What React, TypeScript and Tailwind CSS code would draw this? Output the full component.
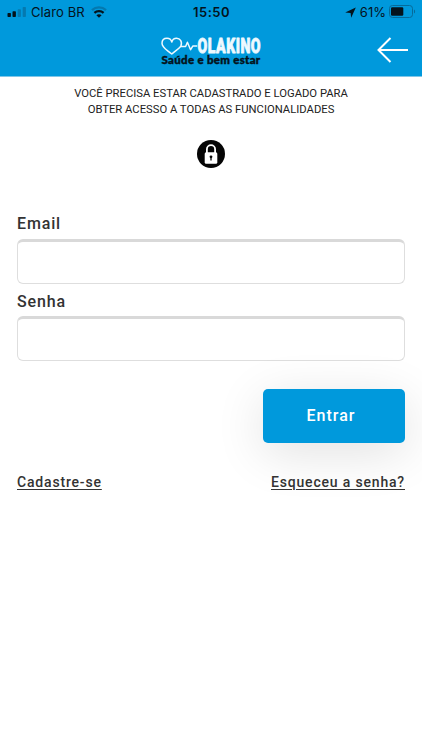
import React from 'react';

interface FieldProps {
  id: string;
  label: string;
  type: string;
}

const SignalIcon = () => (
  <svg width="20" height="10" viewBox="0 0 20 10">
    <rect x="0.5" y="6" width="3.4" height="4" rx="0.7" fill="#04131c" />
    <rect x="5.5" y="4.2" width="3.4" height="5.8" rx="0.7" fill="#04131c" />
    <rect x="10.7" y="2.2" width="3.2" height="7.8" rx="0.7" fill="#0479af" />
    <rect x="15.7" y="0" width="3.2" height="10" rx="0.7" fill="#0479af" />
  </svg>
);

const WifiIcon = () => (
  <svg width="16" height="12" viewBox="0 0 16 12" fill="none" strokeWidth="2.3">
    <path d="M1 4.1C4.9.4 11.1.4 15 4.1" stroke="#0479af" />
    <path d="M3.4 6.9c2.6-2.4 6.6-2.4 9.2 0" stroke="#04131c" />
    <path d="M8 11.8 5.4 9.3c1.5-1.3 3.7-1.3 5.2 0z" fill="#04131c" />
  </svg>
);

const LocationIcon = () => (
  <svg width="11" height="11" viewBox="0 0 11 11" fill="#04131c">
    <path d="M10.8.4 6.2 10.8 5.6 6.1.2 5.4z" />
  </svg>
);

const BatteryIcon = () => (
  <svg width="27" height="13" viewBox="0 0 27 13" className="-mt-px">
    <rect x="0.5" y="0.5" width="23" height="12" rx="3" fill="none" stroke="#066a99" />
    <rect x="2" y="2.2" width="12.3" height="8.6" rx="1.2" fill="#04131c" />
    <path d="M25 4.5v4c1.5-.7 1.5-3.3 0-4z" fill="#066a99" />
  </svg>
);

const Logo = () => (
  <svg width="102" height="32" viewBox="0 0 102 32" className="overflow-visible">
    <path
      d="M20.8 10.5C22.8 5.2 19.8 2.2 16.6 2.2c-2.4 0-4.2 1.6-4.8 3.8-.6-2.2-2.4-3.8-4.8-3.8C4 2.2 2 4.3 2 7.3c0 4.9 5.8 7 9.8 10.7 3-2.9 6.8-4.9 8.8-7.5h5l1.8-4.2 3.2 7.4 2.2-3.6h4.4"
      fill="none"
      stroke="#eef9ff"
      strokeWidth="1.5"
      strokeLinejoin="round"
    />
    <text
      x="37.6"
      y="17"
      textLength="63.5"
      lengthAdjust="spacingAndGlyphs"
      fill="#eef9ff"
      stroke="#eef9ff"
      strokeWidth="0.8"
      strokeLinejoin="round"
      className="font-['Roboto','Liberation_Sans',sans-serif] text-[20px] font-black tracking-[0.7px]"
    >
      OLAKINO
    </text>
    <text
      x="1.5"
      y="28.2"
      textLength="99"
      lengthAdjust="spacingAndGlyphs"
      fill="#04131c"
      stroke="#04131c"
      strokeWidth="0.4"
      className="font-['Lato','Liberation_Sans',sans-serif] text-[10.5px] font-black tracking-[0.3px]"
    >
      Saúde e bem estar
    </text>
  </svg>
);

const BackIcon = () => (
  <svg width="32" height="26" viewBox="0 0 32 26" fill="none" stroke="#fff" strokeWidth="2">
    <path d="M31 13H1.5M13.5 1 1.5 13l12 12" />
  </svg>
);

const LockIcon = () => (
  <svg width="28" height="28" viewBox="0 0 28 28">
    <circle cx="14" cy="14" r="14" fill="#050505" />
    <path d="M9.9 13.5V9.2a4.1 4.1 0 0 1 8.2 0v4.3" fill="none" stroke="#fff" strokeWidth="1.8" />
    <rect x="7.7" y="12.3" width="12.6" height="11.4" rx="1.5" fill="#fff" />
    <circle cx="14" cy="16.8" r="1.4" fill="#050505" />
    <path d="M14 17v3.6" stroke="#050505" strokeWidth="1.3" />
  </svg>
);

const Field: React.FC<FieldProps> = ({ id, label, type }) => (
  <div className="h-[77.5px]">
    <label htmlFor={id} className="block h-[24.5px] text-[16px] leading-5 font-medium tracking-[0.85px]">
      {label}
    </label>
    <input
      id={id}
      type={type}
      className="block h-[45px] w-full rounded-md border border-t-[3px] border-[#dedede] border-t-[#d9d9d9] bg-white px-3 outline-none"
    />
  </div>
);

export default function App() {
  return (
    <div className="min-h-[750px] w-full overflow-hidden bg-white font-['Roboto','Liberation_Sans',sans-serif] text-[#333]">
      <header className="h-[77px] border-b border-[#7fc6e8] bg-[#0099dc]">
        {/* Status bar */}
        <div className="grid h-6 grid-cols-3 items-center pr-[6px] pl-[7px] font-['Inter','Liberation_Sans',sans-serif] text-[13px] text-[#04131c]">
          <div className="flex items-center">
            <SignalIcon />
            <span className="ml-1 w-[60px] pt-px whitespace-nowrap tracking-[0.1px]">Claro BR</span>
            <WifiIcon />
          </div>
          <div className="pt-px text-center font-semibold tracking-[0.5px]">15:50</div>
          <div className="flex items-center justify-end">
            <LocationIcon />
            <span className="mr-[3px] ml-1 pt-px">61%</span>
            <BatteryIcon />
          </div>
        </div>

        {/* Logo and back button */}
        <div className="grid h-[52px] grid-cols-[1fr_102px_1fr] items-center pr-[13px] pl-[13px]">
          <div />
          <div className="pt-1">
            <Logo />
          </div>
          <button type="button" aria-label="Voltar" className="justify-self-end">
            <BackIcon />
          </button>
        </div>
      </header>

      <main className="px-[17px] pt-[9px]">
        <p className="text-center text-[11.25px] leading-4 text-[#222]">
          VOCÊ PRECISA ESTAR CADASTRADO E LOGADO PARA
          <br />
          OBTER ACESSO A TODAS AS FUNCIONALIDADES
        </p>
        <div className="mt-[22px] flex justify-center">
          <LockIcon />
        </div>

        <form className="mt-[46px]">
          <Field id="email" label="Email" type="email" />
          <Field id="senha" label="Senha" type="password" />
          <div className="mt-[20px] flex justify-end">
            <button
              type="button"
              className="h-[54px] w-[142px] rounded-[5px] bg-[#0099dc] pr-1.5 text-[16px] font-medium tracking-[1px] text-white shadow-[0_10px_50px_rgba(0,0,0,0.12)]"
            >
              Entrar
            </button>
          </div>
        </form>

        <div className="relative mt-[29px] flex justify-between text-[14px] leading-5 font-medium tracking-[0.82px]">
          <a href="#cadastro" className="underline underline-offset-2">
            Cadastre-se
          </a>
          <a href="#senha" className="underline underline-offset-2">
            Esqueceu a senha?
          </a>
        </div>
      </main>
    </div>
  );
}
